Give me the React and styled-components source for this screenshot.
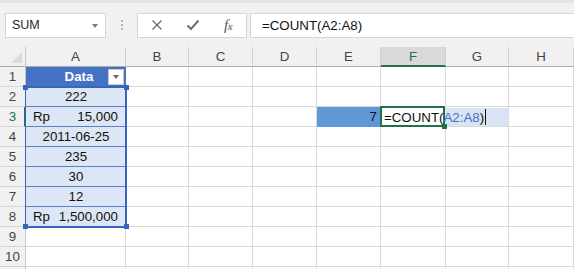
import React from 'react'
import styled, { createGlobalStyle, css } from 'styled-components'

const GlobalStyle = createGlobalStyle`
  html, body {
    margin: 0;
    padding: 0;
    background: #ffffff;
    overflow: hidden;
  }
  body {
    font-family: "Liberation Sans", Arial, sans-serif;
  }
`

const COLS = ['A', 'B', 'C', 'D', 'E', 'F', 'G', 'H']
const GREEN = '#217346'
const GRID = '#dadada'

const Page = styled.div`
  width: 574px;
  height: 269px;
  overflow: hidden;
`

const Toolbar = styled.div`
  display: flex;
  align-items: center;
  height: 47px;
  box-sizing: border-box;
  padding: 0 0 0 5px;
  background: #f1f1f1;
  border-top: 3px solid #e4e4e4;
`

const NameBox = styled.div`
  position: relative;
  width: 101px;
  height: 25px;
  box-sizing: border-box;
  background: #fff;
  border: 1px solid #d6d6d6;
  font-size: 12.5px;
  color: #262626;
  line-height: 23px;
  padding-left: 6px;
  &::after {
    content: '';
    position: absolute;
    right: 7px;
    top: 10px;
    border-left: 3.5px solid transparent;
    border-right: 3.5px solid transparent;
    border-top: 4px solid #7a7a7a;
  }
`

const Grip = styled.div`
  width: 31px;
  height: 25px;
  display: flex;
  flex-direction: column;
  align-items: center;
  justify-content: center;
  gap: 2px;
  span {
    width: 2px;
    height: 2px;
    background: #b4b4b4;
  }
`

const FxButtons = styled.div`
  display: flex;
  align-items: center;
  width: 110px;
  height: 25px;
  box-sizing: border-box;
  background: #fff;
  border: 1px solid #d6d6d6;
  margin-right: 3px;
`

const FxButton = styled.div`
  width: ${p => p.$w}px;
  display: flex;
  align-items: center;
  justify-content: center;
  color: #6a6a6a;
`

const FxLabel = styled.span`
  font-family: "Liberation Serif", "Times New Roman", serif;
  font-style: italic;
  font-size: 15px;
  color: #555;
  letter-spacing: -0.5px;
  small {
    font-size: 11px;
  }
`

const FormulaInput = styled.div`
  flex: 1;
  height: 25px;
  box-sizing: border-box;
  background: #fff;
  border: 1px solid #d6d6d6;
  border-right: none;
  font-size: 13.3px;
  line-height: 23px;
  color: #111;
  padding-left: 11px;
`

const Sheet = styled.div`
  position: relative;
  display: grid;
  grid-template-columns: 26px 100px 63px 64px 64px 64px 65px 63px 1fr;
  grid-auto-rows: 20px;
  font-size: 13.3px;
`

const Corner = styled.div`
  position: relative;
  background: #f1f1f1;
  border-right: 1px solid #c8c8c8;
  border-bottom: 1px solid #ababab;
  &::after {
    content: '';
    position: absolute;
    right: 3px;
    bottom: 3px;
    border-left: 11px solid transparent;
    border-bottom: 11px solid #dcdcdc;
  }
`

const ColHeader = styled.div`
  box-sizing: border-box;
  display: flex;
  align-items: center;
  justify-content: center;
  background: ${p => (p.$active ? '#d9d9d9' : '#f1f1f1')};
  color: ${p => (p.$active ? GREEN : '#444')};
  border-right: 1px solid #cfcfcf;
  border-bottom: ${p => (p.$active ? `2px solid ${GREEN}` : '1px solid #ababab')};
  padding-top: ${p => (p.$active ? '1px' : '0')};
`

const RowHeader = styled.div`
  box-sizing: border-box;
  display: flex;
  align-items: center;
  justify-content: center;
  background: #f1f1f1;
  color: ${p => (p.$active ? GREEN : '#444')};
  border-bottom: 1px solid #d4d4d4;
  border-right: ${p => (p.$active ? `2px solid ${GREEN}` : '1px solid #c8c8c8')};
  padding-left: ${p => (p.$active ? '1px' : '0')};
`

const Cell = styled.div`
  position: relative;
  box-sizing: border-box;
  display: flex;
  align-items: center;
  border-right: 1px solid ${GRID};
  border-bottom: 1px solid ${GRID};
  color: #111;
  ${p =>
    p.$fill &&
    css`
      background: ${p.$fill};
      border-color: ${p.$fill};
    `}
  ${p => p.$right && css`justify-content: flex-end; padding-right: 3px;`}
`

const TableHead = styled.div`
  position: relative;
  box-sizing: border-box;
  display: flex;
  align-items: center;
  justify-content: center;
  background: #4472c4;
  color: #fff;
  font-weight: bold;
  border-bottom: 1px solid #4472c4;
  padding-left: 6px;
`

const FilterButton = styled.div`
  position: absolute;
  right: 2px;
  top: 2px;
  width: 16px;
  height: 16px;
  box-sizing: border-box;
  background: #fff;
  border: 1px solid #c9c9c9;
  &::after {
    content: '';
    position: absolute;
    left: 4px;
    top: 5px;
    border-left: 3.5px solid transparent;
    border-right: 3.5px solid transparent;
    border-top: 4px solid #6b6b6b;
  }
`

const TableCell = styled.div`
  box-sizing: border-box;
  display: flex;
  align-items: center;
  justify-content: ${p => (p.$money ? 'space-between' : 'center')};
  padding: ${p => (p.$money ? '0 8px 0 7px' : '0')};
  background: #dde6f4;
  border-bottom: 1px solid #5a80c8;
  color: #111;
`

const RangeFrame = styled.div`
  position: absolute;
  left: 25px;
  top: 39px;
  width: 102px;
  height: 142px;
  box-sizing: border-box;
  border: 2px solid #3565c0;
  border-left-width: 1px;
  pointer-events: none;
`

const Handle = styled.span`
  position: absolute;
  width: 5px;
  height: 5px;
  background: ${p => p.$color || '#3565c0'};
  ${p => (p.$top ? 'top: -3px;' : 'bottom: -3px;')}
  ${p => (p.$left ? 'left: -3px;' : 'right: -4px;')}
`

const EditFrame = styled.div`
  position: absolute;
  left: -1px;
  top: -1px;
  right: 0;
  bottom: -1px;
  border: 2px solid ${GREEN};
  pointer-events: none;
  z-index: 2;
`

const Overflow = styled.div`
  position: absolute;
  left: 100%;
  top: 1px;
  width: 63px;
  height: 18px;
  background: #dae3f3;
`

const EditText = styled.span`
  position: relative;
  z-index: 3;
  white-space: nowrap;
  padding-left: 3px;
  color: #111;
`

const Ref = styled.span`
  color: #4472c4;
`

const Caret = styled.span`
  display: inline-block;
  width: 1px;
  height: 16px;
  margin-left: 1px;
  vertical-align: -3px;
  background: #111;
`

const tableRows = [
  { v: '222' },
  { rp: true, v: '15,000' },
  { v: '2011-06-25' },
  { v: '235' },
  { v: '30' },
  { v: '12' },
  { rp: true, v: '1,500,000' },
]

function CrossIcon() {
  return (
    <svg width="12" height="12" viewBox="0 0 12 12">
      <path d="M1.5 1.5 L10.5 10.5 M10.5 1.5 L1.5 10.5" stroke="#6d6d6d" strokeWidth="1.4" fill="none" />
    </svg>
  )
}

function CheckIcon() {
  return (
    <svg width="14" height="12" viewBox="0 0 14 12">
      <path d="M1.5 6.5 L5 10 L12.5 1.5" stroke="#6d6d6d" strokeWidth="2" fill="none" />
    </svg>
  )
}

function OtherCells({ row }) {
  return COLS.slice(1).map(col => {
    const key = `${col}${row}`
    if (row === 3 && col === 'E') {
      return (
        <Cell key={key} $fill="#5e98d6" $right>
          7
        </Cell>
      )
    }
    if (row === 3 && col === 'F') {
      return (
        <Cell key={key}>
          <EditFrame>
            <Handle $color={GREEN} style={{ bottom: -4, right: -4 }} />
          </EditFrame>
          <Overflow />
          <EditText>
            =COUNT(<Ref>A2:A8</Ref>)<Caret />
          </EditText>
        </Cell>
      )
    }
    return <Cell key={key} />
  })
}

function ColumnA({ row }) {
  if (row === 1) {
    return (
      <TableHead>
        Data
        <FilterButton />
      </TableHead>
    )
  }
  const data = tableRows[row - 2]
  if (!data) return <Cell />
  if (data.rp) {
    return (
      <TableCell $money>
        <span>Rp</span>
        <span>{data.v}</span>
      </TableCell>
    )
  }
  return <TableCell>{data.v}</TableCell>
}

export default function App() {
  const rows = Array.from({ length: 11 }, (_, i) => i + 1)
  return (
    <Page>
      <GlobalStyle />
      <Toolbar>
        <NameBox>SUM</NameBox>
        <Grip>
          <span />
          <span />
          <span />
        </Grip>
        <FxButtons>
          <FxButton $w={38}>
            <CrossIcon />
          </FxButton>
          <FxButton $w={34}>
            <CheckIcon />
          </FxButton>
          <FxButton $w={36}>
            <FxLabel>
              f<small>x</small>
            </FxLabel>
          </FxButton>
        </FxButtons>
        <FormulaInput>=COUNT(A2:A8)</FormulaInput>
      </Toolbar>
      <Sheet>
        <Corner />
        {COLS.map(c => (
          <ColHeader key={c} $active={c === 'F'}>
            {c}
          </ColHeader>
        ))}
        {rows.map(r => (
          <React.Fragment key={r}>
            <RowHeader $active={r === 3}>{r}</RowHeader>
            <ColumnA row={r} />
            <OtherCells row={r} />
          </React.Fragment>
        ))}
        <RangeFrame>
          <Handle $top $left />
          <Handle $top />
          <Handle $left />
          <Handle />
        </RangeFrame>
      </Sheet>
    </Page>
  )
}
